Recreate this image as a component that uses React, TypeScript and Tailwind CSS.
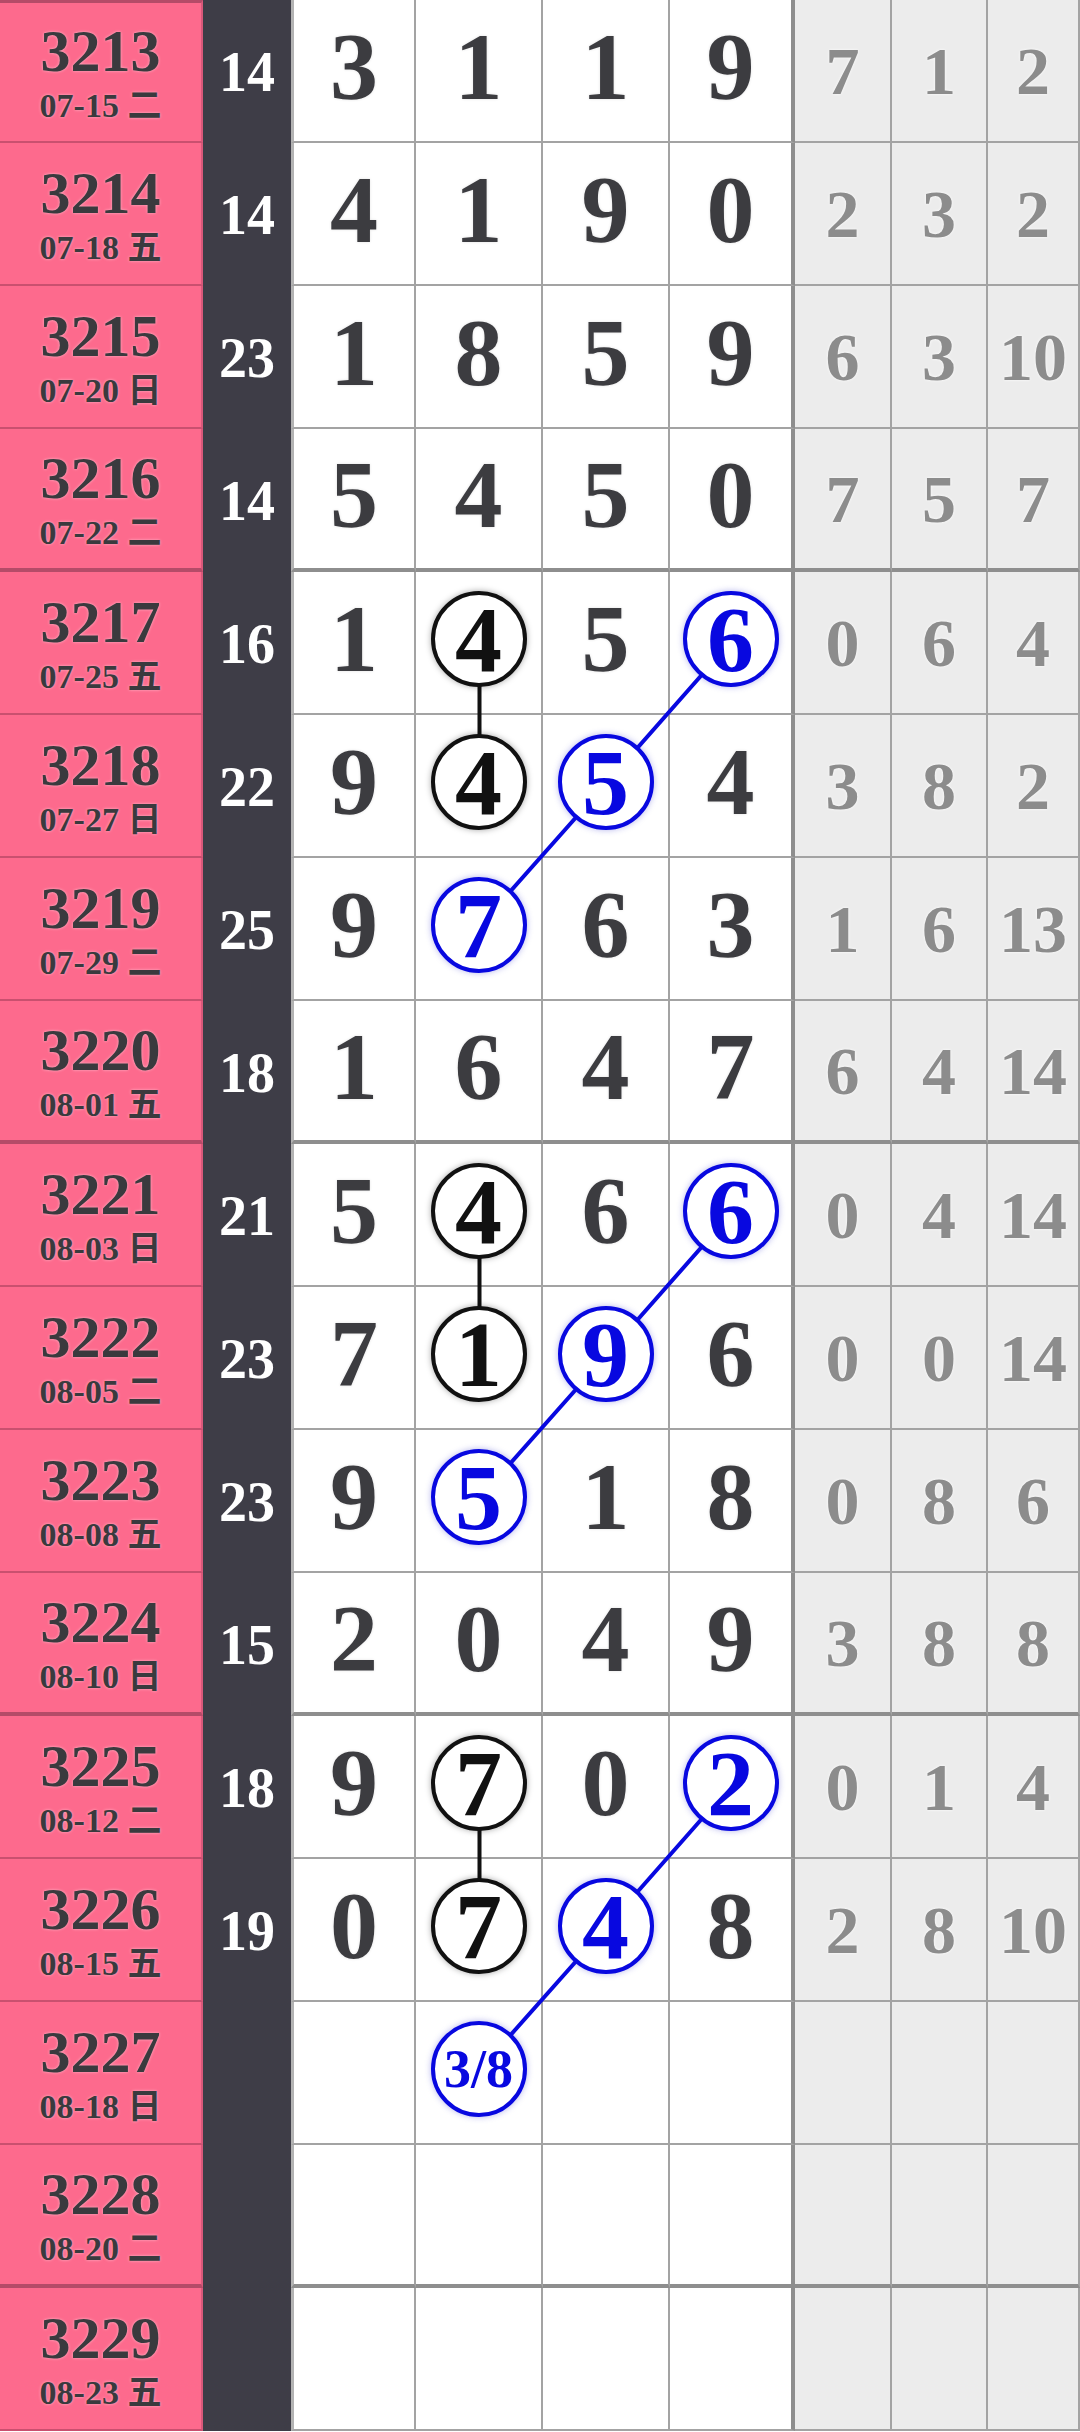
import React from 'react';

type Row = {
  no: string;
  date: string;
  sum: string;
  main: string[];
  gaps: string[];
};

const ROWS: Row[] = [
  { no: '3213', date: '07-15 二', sum: '14', main: ['3', '1', '1', '9'], gaps: ['7', '1', '2'] },
  { no: '3214', date: '07-18 五', sum: '14', main: ['4', '1', '9', '0'], gaps: ['2', '3', '2'] },
  { no: '3215', date: '07-20 日', sum: '23', main: ['1', '8', '5', '9'], gaps: ['6', '3', '10'] },
  { no: '3216', date: '07-22 二', sum: '14', main: ['5', '4', '5', '0'], gaps: ['7', '5', '7'] },
  { no: '3217', date: '07-25 五', sum: '16', main: ['1', '4', '5', '6'], gaps: ['0', '6', '4'] },
  { no: '3218', date: '07-27 日', sum: '22', main: ['9', '4', '5', '4'], gaps: ['3', '8', '2'] },
  { no: '3219', date: '07-29 二', sum: '25', main: ['9', '7', '6', '3'], gaps: ['1', '6', '13'] },
  { no: '3220', date: '08-01 五', sum: '18', main: ['1', '6', '4', '7'], gaps: ['6', '4', '14'] },
  { no: '3221', date: '08-03 日', sum: '21', main: ['5', '4', '6', '6'], gaps: ['0', '4', '14'] },
  { no: '3222', date: '08-05 二', sum: '23', main: ['7', '1', '9', '6'], gaps: ['0', '0', '14'] },
  { no: '3223', date: '08-08 五', sum: '23', main: ['9', '5', '1', '8'], gaps: ['0', '8', '6'] },
  { no: '3224', date: '08-10 日', sum: '15', main: ['2', '0', '4', '9'], gaps: ['3', '8', '8'] },
  { no: '3225', date: '08-12 二', sum: '18', main: ['9', '7', '0', '2'], gaps: ['0', '1', '4'] },
  { no: '3226', date: '08-15 五', sum: '19', main: ['0', '7', '4', '8'], gaps: ['2', '8', '10'] },
  { no: '3227', date: '08-18 日', sum: '', main: ['', '3/8', '', ''], gaps: ['', '', ''] },
  { no: '3228', date: '08-20 二', sum: '', main: ['', '', '', ''], gaps: ['', '', ''] },
  { no: '3229', date: '08-23 五', sum: '', main: ['', '', '', ''], gaps: ['', '', ''] },
];

// row-col -> circle colour
const CIRCLES: Record<string, 'k' | 'b'> = {
  '4-1': 'k', '5-1': 'k', '4-3': 'b', '5-2': 'b', '6-1': 'b',
  '8-1': 'k', '9-1': 'k', '8-3': 'b', '9-2': 'b', '10-1': 'b',
  '12-1': 'k', '13-1': 'k', '12-3': 'b', '13-2': 'b', '14-1': 'b',
};

const ROW_H = 143;
const COL_X = [479.5, 606.5, 732.5]; // centres of digit columns 2..4
const cy = (r: number) => r * ROW_H + 68;

const serif = "font-['Liberation_Serif','Noto_Sans_CJK_SC',serif]";

function Circle({ value, tone }: { value: string; tone: 'k' | 'b' }) {
  const blue = tone === 'b';
  return (
    <div
      className={`relative z-10 flex h-[96px] w-[96px] items-center justify-center rounded-full border-4 bg-white ${
        blue
          ? 'border-[#0808e0] text-[#0808e0] shadow-[0_0_6px_rgba(40,40,200,0.35)]'
          : 'border-[#111] text-[#111] shadow-[0_0_6px_rgba(0,0,0,0.35)]'
      }`}
    >
      <span className={`${value.length > 1 ? 'text-[54px]' : 'text-[94px]'} font-bold leading-none`}>{value}</span>
    </div>
  );
}

export default function App() {
  return (
    <div className={`relative h-[2432px] w-[1080px] overflow-hidden bg-white ${serif}`}>
      <div className="grid grid-cols-[203px_88px_125px_127px_127px_125px_97px_96px_92px]">
        {ROWS.map((row, r) => {
          const groupEnd = r % 4 === 3;
          const rowLine = groupEnd ? 'border-b-4 border-b-[#8e8e8e]' : 'border-b-2 border-b-[#a3a3a3]';
          return (
            <React.Fragment key={row.no}>
              <div
                className={`flex h-[143px] flex-col items-center justify-center gap-2 border-r-2 border-r-[#d9587a] bg-[#fd6a8d] font-bold text-[#3a3a3e] [text-shadow:0_0_3px_rgba(255,220,230,0.7)] ${
                  groupEnd ? 'border-b-4 border-b-[#b54b68]' : 'border-b-2 border-b-[#c9506f]'
                } ${r === 0 ? 'border-t-[3px] border-t-[#b54b68]' : ''}`}
              >
                <span className="text-[60px] leading-none">{row.no}</span>
                <span className="text-[34px] leading-none">{row.date}</span>
              </div>
              <div className="flex h-[143px] items-center justify-center bg-[#3e3d47] text-[56px] font-bold leading-none text-white">
                {row.sum}
              </div>
              {row.main.map((v, c) => {
                const tone = CIRCLES[`${r}-${c}`];
                const edge =
                  c === 0
                    ? 'border-l-[3px] border-l-[#b3b3b3] border-r-2 border-r-[#a3a3a3]'
                    : c === 3
                    ? 'border-r-4 border-r-[#8e8e8e]'
                    : 'border-r-2 border-r-[#a3a3a3]';
                return (
                  <div key={c} className={`flex h-[143px] items-center justify-center pb-2 ${edge} ${rowLine}`}>
                    {tone ? (
                      <Circle value={v} tone={tone} />
                    ) : (
                      <span className="text-[96px] font-bold leading-none text-[#3c3c40] [text-shadow:0_0_3px_rgba(0,0,0,0.12)]">
                        {v}
                      </span>
                    )}
                  </div>
                );
              })}
              {row.gaps.map((v, c) => (
                <div
                  key={`g${c}`}
                  className={`flex h-[143px] items-center justify-center border-r-2 border-r-[#a3a3a3] bg-[#ececec] ${rowLine}`}
                >
                  <span className="text-[68px] font-bold leading-none text-[#8c8c8c] [text-shadow:0_0_3px_#ffffff]">{v}</span>
                </div>
              ))}
            </React.Fragment>
          );
        })}
      </div>

      <svg className="pointer-events-none absolute left-0 top-0 z-[5]" width={1080} height={ROWS.length * ROW_H}>
        {[4, 8, 12].map((r) => (
          <g key={r}>
            <line x1={COL_X[0]} y1={cy(r)} x2={COL_X[0]} y2={cy(r + 1)} stroke="#111" strokeWidth={4} />
            <polyline
              points={`${COL_X[2]},${cy(r)} ${COL_X[1]},${cy(r + 1)} ${COL_X[0]},${cy(r + 2)}`}
              fill="none"
              stroke="#0808e0"
              strokeWidth={4}
            />
          </g>
        ))}
      </svg>
    </div>
  );
}
